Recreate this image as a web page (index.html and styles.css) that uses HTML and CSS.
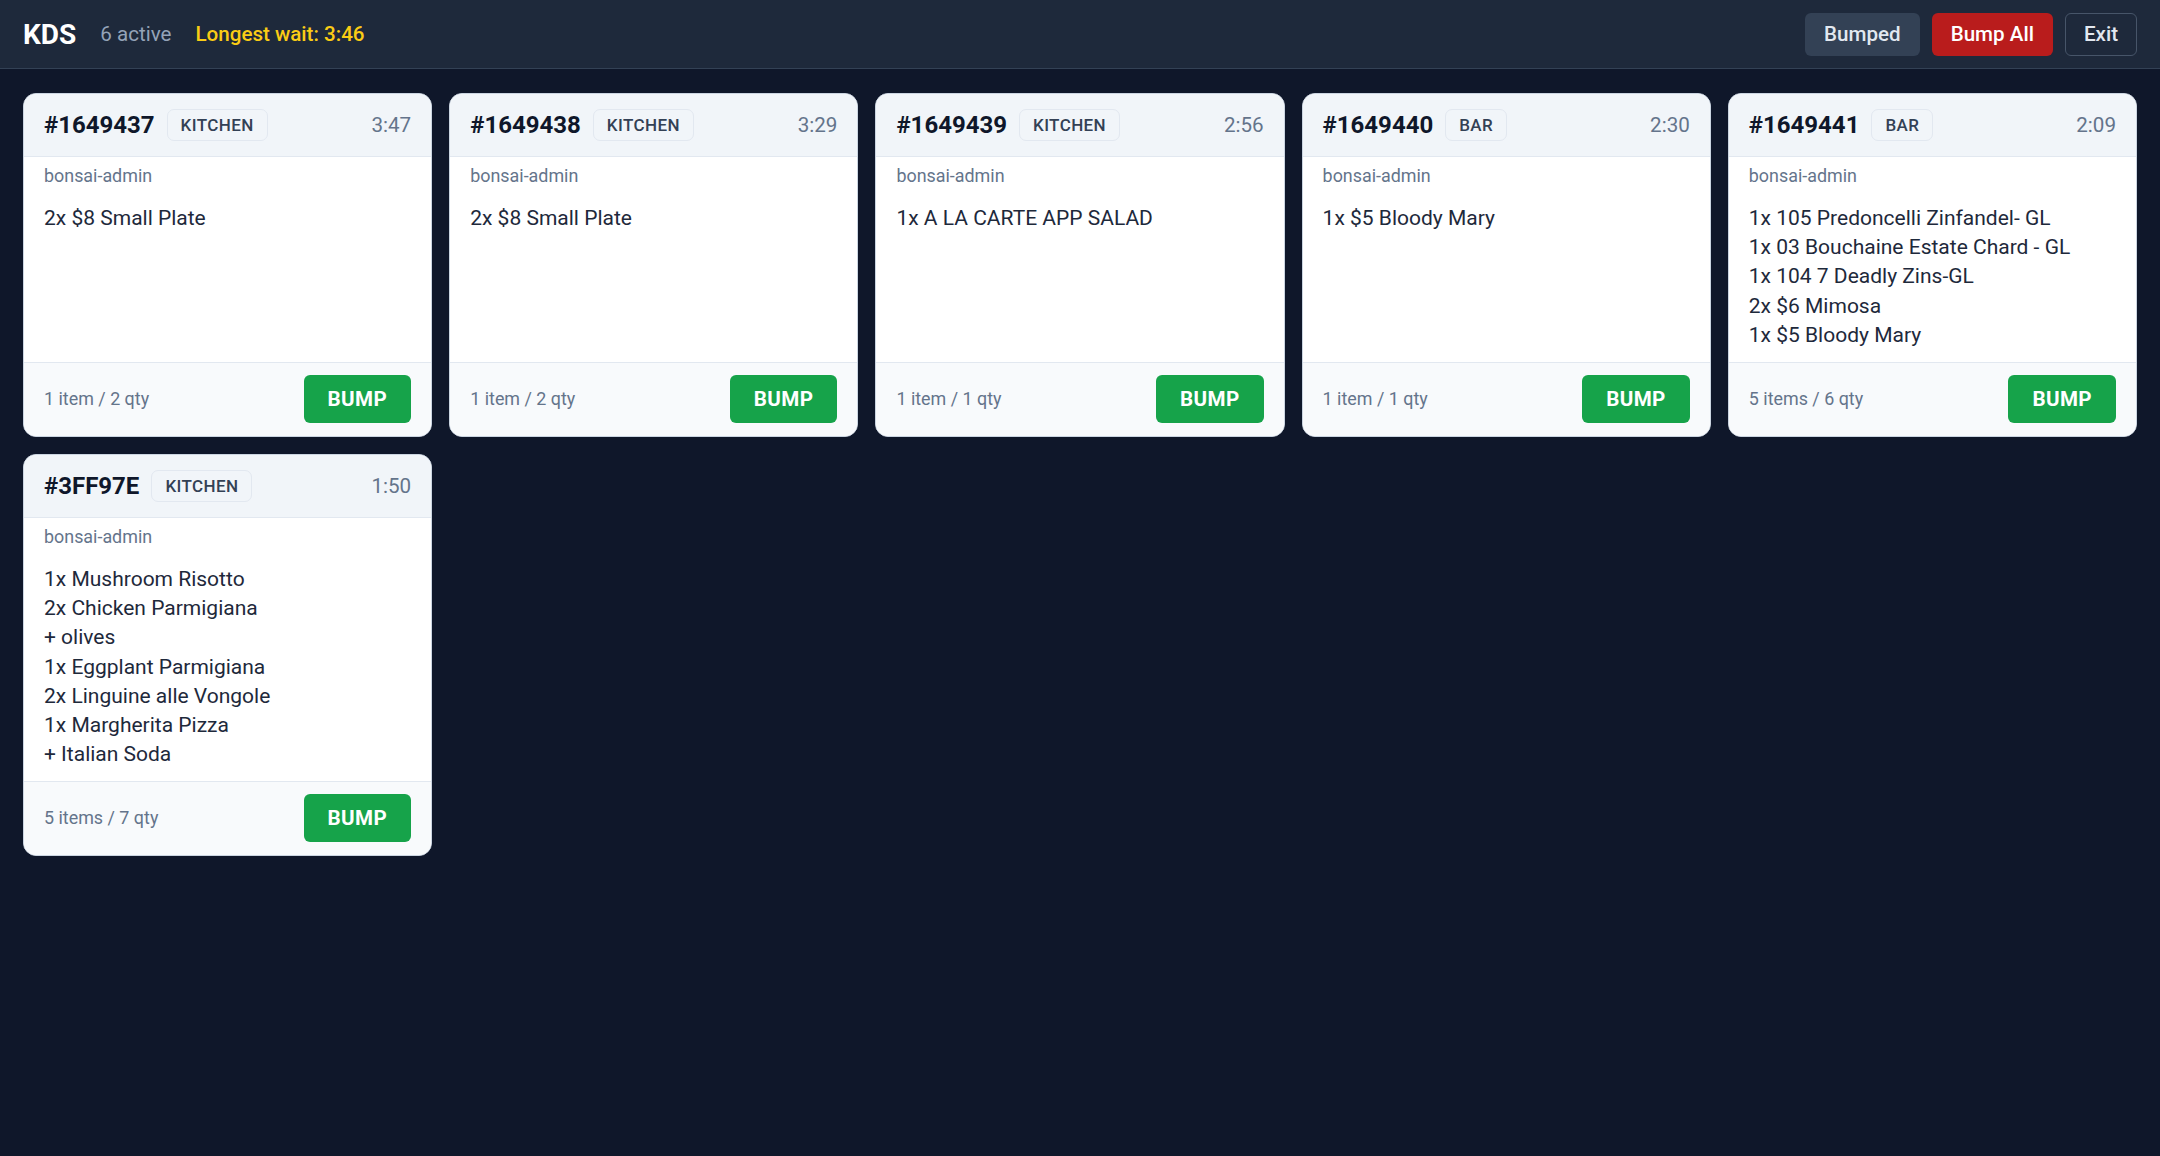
FILE: index.html
```html
<!DOCTYPE html>
<html lang="en">

<head>
    <meta charset="UTF-8">
    <meta name="viewport" content="width=device-width, initial-scale=1.0">
    <title>KDS</title>
    <link rel="stylesheet" href="styles.css">
</head>

<body>
    <header class="topbar">
        <div class="topbar-left">
            <span class="brand">KDS</span>
            <span class="active-count">6 active</span>
            <span class="longest-wait">Longest wait: 3:46</span>
        </div>
        <div class="topbar-right">
            <button class="btn btn-muted">Bumped</button>
            <button class="btn btn-danger">Bump All</button>
            <button class="btn btn-outline">Exit</button>
        </div>
    </header>

    <main class="tickets">
        <div class="ticket">
            <div class="ticket-head">
                <span class="ticket-id">#1649437</span>
                <span class="station">KITCHEN</span>
                <span class="timer">3:47</span>
            </div>
            <div class="ticket-body">
                <div class="server">bonsai-admin</div>
                <ul class="items">
                    <li>2x $8 Small Plate</li>
                </ul>
            </div>
            <div class="ticket-foot">
                <span class="count">1 item / 2 qty</span>
                <button class="bump">BUMP</button>
            </div>
        </div>

        <div class="ticket">
            <div class="ticket-head">
                <span class="ticket-id">#1649438</span>
                <span class="station">KITCHEN</span>
                <span class="timer">3:29</span>
            </div>
            <div class="ticket-body">
                <div class="server">bonsai-admin</div>
                <ul class="items">
                    <li>2x $8 Small Plate</li>
                </ul>
            </div>
            <div class="ticket-foot">
                <span class="count">1 item / 2 qty</span>
                <button class="bump">BUMP</button>
            </div>
        </div>

        <div class="ticket">
            <div class="ticket-head">
                <span class="ticket-id">#1649439</span>
                <span class="station">KITCHEN</span>
                <span class="timer">2:56</span>
            </div>
            <div class="ticket-body">
                <div class="server">bonsai-admin</div>
                <ul class="items">
                    <li>1x A LA CARTE APP SALAD</li>
                </ul>
            </div>
            <div class="ticket-foot">
                <span class="count">1 item / 1 qty</span>
                <button class="bump">BUMP</button>
            </div>
        </div>

        <div class="ticket">
            <div class="ticket-head">
                <span class="ticket-id">#1649440</span>
                <span class="station">BAR</span>
                <span class="timer">2:30</span>
            </div>
            <div class="ticket-body">
                <div class="server">bonsai-admin</div>
                <ul class="items">
                    <li>1x $5 Bloody Mary</li>
                </ul>
            </div>
            <div class="ticket-foot">
                <span class="count">1 item / 1 qty</span>
                <button class="bump">BUMP</button>
            </div>
        </div>

        <div class="ticket">
            <div class="ticket-head">
                <span class="ticket-id">#1649441</span>
                <span class="station">BAR</span>
                <span class="timer">2:09</span>
            </div>
            <div class="ticket-body">
                <div class="server">bonsai-admin</div>
                <ul class="items">
                    <li>1x 105 Predoncelli Zinfandel- GL</li>
                    <li>1x 03 Bouchaine Estate Chard - GL</li>
                    <li>1x 104 7 Deadly Zins-GL</li>
                    <li>2x $6 Mimosa</li>
                    <li>1x $5 Bloody Mary</li>
                </ul>
            </div>
            <div class="ticket-foot">
                <span class="count">5 items / 6 qty</span>
                <button class="bump">BUMP</button>
            </div>
        </div>

        <div class="ticket">
            <div class="ticket-head">
                <span class="ticket-id">#3FF97E</span>
                <span class="station">KITCHEN</span>
                <span class="timer">1:50</span>
            </div>
            <div class="ticket-body">
                <div class="server">bonsai-admin</div>
                <ul class="items">
                    <li>1x Mushroom Risotto</li>
                    <li>2x Chicken Parmigiana</li>
                    <li>+ olives</li>
                    <li>1x Eggplant Parmigiana</li>
                    <li>2x Linguine alle Vongole</li>
                    <li>1x Margherita Pizza</li>
                    <li>+ Italian Soda</li>
                </ul>
            </div>
            <div class="ticket-foot">
                <span class="count">5 items / 7 qty</span>
                <button class="bump">BUMP</button>
            </div>
        </div>
    </main>
</body>

</html>
```

FILE: styles.css
```css
body {
    font-family: Roboto, "Liberation Sans", sans-serif;
    margin: 0;
    padding: 0;
    background-color: #0f172a;
    min-height: 100vh;
}

.topbar {
    display: flex;
    justify-content: space-between;
    align-items: center;
    height: 68px;
    padding: 0 23px;
    background-color: #1e293b;
    border-bottom: 1px solid #334155;
}

.topbar-left {
    display: flex;
    align-items: center;
    gap: 24px;
}

.brand {
    color: #fff;
    font-size: 28px;
    font-weight: bold;
}

.active-count {
    color: #94a3b8;
    font-size: 20.6px;
}

.longest-wait {
    color: #facc15;
    font-size: 20.6px;
    font-weight: 500;
}

.topbar-right {
    display: flex;
    gap: 12px;
}

.btn {
    font-family: inherit;
    font-size: 20.6px;
    font-weight: 500;
    height: 43px;
    padding: 0 18px;
    border: 1px solid transparent;
    border-radius: 6px;
    cursor: pointer;
}

.btn-muted {
    background-color: #334155;
    color: #e2e8f0;
}

.btn-danger {
    background-color: #b91c1c;
    color: #fff;
}

.btn-outline {
    background-color: transparent;
    border-color: #475569;
    color: #e2e8f0;
}

.tickets {
    display: grid;
    grid-template-columns: repeat(5, 1fr);
    gap: 17px;
    padding: 24px 23px;
}

.ticket {
    display: flex;
    flex-direction: column;
    background-color: #fff;
    border: 1px solid #cbd5e1;
    border-radius: 13px;
    overflow: hidden;
}

.ticket-head {
    display: flex;
    align-items: center;
    gap: 12px;
    padding: 15px 20px;
    background-color: #f1f5f9;
    border-bottom: 1px solid #e2e8f0;
}

.ticket-id {
    color: #0f172a;
    font-size: 24px;
    font-weight: bold;
}

.station {
    padding: 0 13px;
    height: 30px;
    line-height: 30px;
    border: 1px solid #e2e8f0;
    border-radius: 7px;
    color: #334155;
    font-size: 17px;
    font-weight: 500;
    letter-spacing: 0.4px;
}

.timer {
    margin-left: auto;
    color: #64748b;
    font-size: 20.6px;
}

.ticket-body {
    flex: 1;
    padding: 7px 20px 12px;
}

.server {
    color: #64748b;
    font-size: 17.9px;
    line-height: 24px;
}

.items {
    list-style: none;
    margin: 16px 0 0;
    padding: 0;
    color: #1e293b;
    font-size: 21px;
    line-height: 29.2px;
}

.ticket-foot {
    display: flex;
    justify-content: space-between;
    align-items: center;
    padding: 12px 20px 13px;
    background-color: #f8fafc;
    border-top: 1px solid #e2e8f0;
}

.count {
    color: #64748b;
    font-size: 17.9px;
    margin-top: -2px;
}

.bump {
    font-family: inherit;
    font-size: 20.6px;
    font-weight: bold;
    letter-spacing: 0.4px;
    line-height: 24px;
    padding: 12px 24px;
    background-color: #16a34a;
    color: #fff;
    border: none;
    border-radius: 6px;
    cursor: pointer;
}
```
